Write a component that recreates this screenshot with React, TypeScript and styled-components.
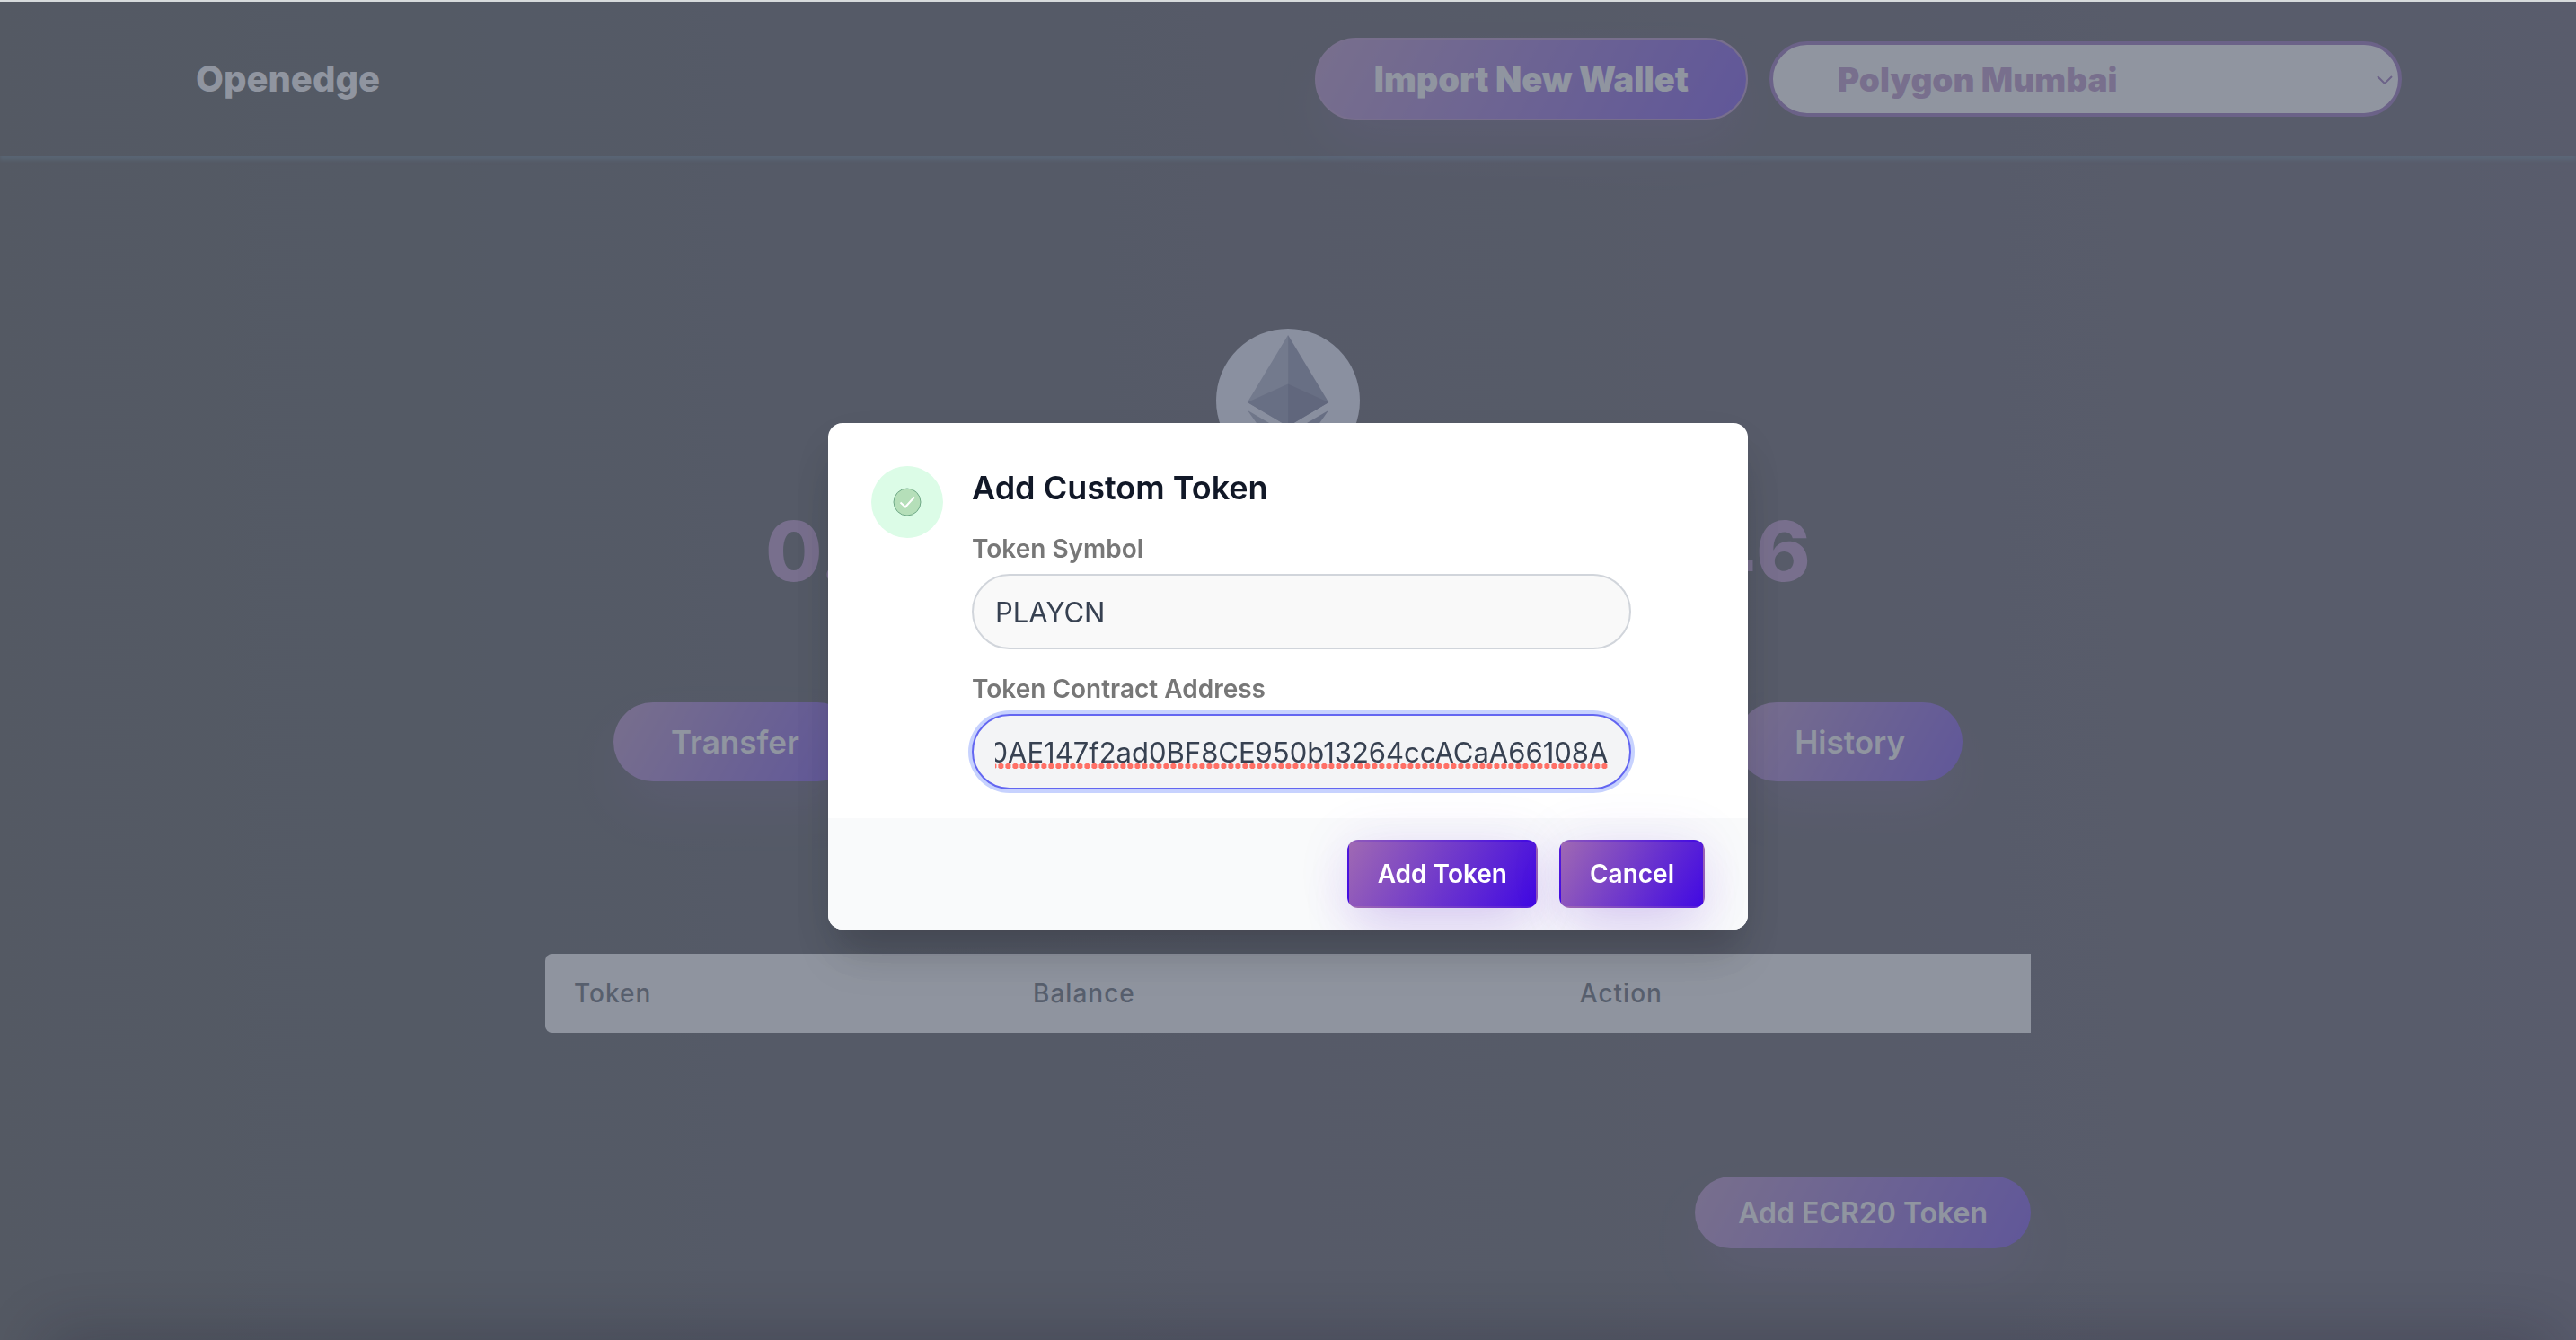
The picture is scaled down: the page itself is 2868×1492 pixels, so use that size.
import React, { useLayoutEffect, useRef, useState } from "react";
import styled, { createGlobalStyle, css } from "styled-components";

const GlobalStyle = createGlobalStyle`
  *, *::before, *::after { box-sizing: border-box; }
  html, body { margin: 0; padding: 0; background: #10131a; }
  body { font-family: Inter, "Noto Sans", sans-serif; overflow: hidden; }
  button, input, select { font-family: inherit; margin: 0; }
`;

const violetGradient = "linear-gradient(120deg, #9f69b3, #4109e3)";

const Page = styled.div`
  min-height: 100vh;
  border-top: 2px solid #d8dcdd;
  background: linear-gradient(90deg, #11130f 0%, #14151d 30%, #1b1822 60%, #241f31 100%);
`;

const Header = styled.header`
  height: 172px;
  padding: 0 24px;
  display: flex;
  justify-content: center;
  box-shadow: 0 4px 4px rgba(56, 110, 140, 0.5);
`;

const HeaderInner = styled.div`
  width: 100%;
  max-width: 2480px;
  padding-left: 24px;
  display: flex;
  align-items: center;
  justify-content: space-between;
`;

const Logo = styled.a`
  color: #fff;
  font-size: 40px;
  line-height: 48px;
  font-weight: 800;
  text-decoration: none;
`;

const HeaderActions = styled.div`
  display: flex;
  align-items: center;
  gap: 24px;
`;

const PillButton = styled.button<{ $size: "large" | "medium" | "small" }>`
  border: 0;
  border-radius: 48px;
  color: #fff;
  background-image: ${violetGradient};
  box-shadow: 0 30px 60px -10px rgba(151, 65, 252, 0.2);
  cursor: pointer;
  white-space: nowrap;
  font-weight: 600;
  ${({ $size }) =>
    $size === "large" &&
    css`
      height: 92px;
      padding: 0 64px;
      border: 2px solid #9f69b3;
      font-size: 38px;
      font-weight: 900;
    `}
  ${({ $size }) =>
    $size === "medium" &&
    css`
      height: 88px;
      padding: 0 64px;
      font-size: 35px;
    `}
  ${({ $size }) =>
    $size === "small" &&
    css`
      height: 80px;
      padding: 0 48px;
      font-size: 32px;
    `}
`;

const NetworkPicker = styled.div`
  position: relative;
  width: 704px;
`;

const NetworkSelect = styled.select`
  appearance: none;
  display: block;
  width: 100%;
  height: 84px;
  padding: 0 72px;
  border: 4px solid #6e35a0;
  border-radius: 42px;
  background: #fff;
  color: #9f69b3;
  font-size: 37px;
  font-weight: 900;
`;

const Chevron = styled.svg`
  position: absolute;
  right: 10px;
  top: 38px;
  width: 18px;
  height: 10px;
  pointer-events: none;
`;

const Main = styled.main`
  display: flex;
  flex-direction: column;
  align-items: center;
  padding: 192px 24px 0;
`;

const Coin = styled.svg`
  display: block;
  width: 160px;
  height: 160px;
`;

const Balance = styled.h1`
  margin: 40px 0 0;
  color: #9f69b3;
  font-size: 92px;
  line-height: 96px;
  font-weight: 800;
`;

const AccountActions = styled.div`
  width: 100%;
  max-width: 1502px;
  margin-top: 120px;
  display: flex;
  justify-content: space-between;
`;

const Assets = styled.section`
  width: 100%;
  max-width: 1654px;
  margin-top: 192px;
  display: flex;
  flex-direction: column;
  align-items: flex-end;
  gap: 160px;
`;

const AssetTable = styled.table`
  width: 100%;
  border-collapse: collapse;
  table-layout: fixed;
  background: #f9fafb;
  border-radius: 8px 0 0 8px;
`;

const HeadCell = styled.th<{ $width: string }>`
  width: ${({ $width }) => $width};
  height: 88px;
  padding: 0 32px;
  text-align: left;
  color: #1f2937;
  font-size: 28px;
  font-weight: 500;
  letter-spacing: 1px;
`;

const Overlay = styled.div`
  position: fixed;
  inset: 2px 0 0;
  display: flex;
  align-items: center;
  justify-content: center;
  padding-top: 12px;
  background: rgba(107, 114, 128, 0.75);
`;

const Dialog = styled.form`
  width: 1024px;
  border-radius: 16px;
  overflow: hidden;
  background: #fff;
  box-shadow: 0 40px 50px -10px rgba(0, 0, 0, 0.12), 0 20px 50px -10px rgba(0, 0, 0, 0.12);
`;

const DialogBody = styled.div`
  display: flex;
  align-items: flex-start;
  gap: 32px;
  padding: 48px 48px 32px;
`;

const Badge = styled.div`
  flex: none;
  width: 80px;
  height: 80px;
  border-radius: 50%;
  display: flex;
  align-items: center;
  justify-content: center;
  background: #dcfce7;
`;

const Fields = styled.div`
  flex: 1;
  display: flex;
  flex-direction: column;
  gap: 24px;
`;

const DialogTitle = styled.h2`
  margin: 0;
  color: #111827;
  font-size: 36px;
  line-height: 48px;
  font-weight: 600;
`;

const Field = styled.div`
  width: 90%;
  display: flex;
  flex-direction: column;
  gap: 8px;
`;

const FieldLabel = styled.label`
  color: #777;
  font-size: 28px;
  line-height: 40px;
  font-weight: 600;
`;

const InputWrap = styled.div`
  position: relative;
`;

const TextInput = styled.input<{ $active?: boolean }>`
  display: block;
  width: 100%;
  height: 84px;
  padding: 0 24px;
  border: 2px solid #d1d5db;
  border-radius: 42px;
  outline: none;
  background: #f9f9f9;
  color: #374151;
  font-size: 31px;
  ${({ $active }) =>
    $active &&
    css`
      border-color: #6366f1;
      background: #f3f4f6;
      box-shadow: 0 0 0 4px #c7d2fe;
    `}
`;

const SpellingMark = styled.span`
  position: absolute;
  left: 26px;
  right: 26px;
  top: 55px;
  height: 6px;
  background: radial-gradient(circle at center, #ff7066 2px, #ff7066 3px, transparent 3px) right top / 8px 6px repeat-x;
  pointer-events: none;
`;

const DialogFooter = styled.div`
  display: flex;
  justify-content: flex-end;
  gap: 24px;
  padding: 24px 48px;
  background: #f9fafb;
`;

const DialogButton = styled.button`
  height: 76px;
  padding: 0 32px;
  border: 2px solid transparent;
  border-radius: 12px;
  color: #fff;
  background-image: ${violetGradient};
  box-shadow: 0 30px 60px -10px rgba(101, 41, 212, 0.2), 0 0 60px rgba(101, 41, 212, 0.1);
  font-size: 28px;
  font-weight: 600;
  cursor: pointer;
`;

const BottomShade = styled.div`
  position: fixed;
  left: 56px;
  right: 32px;
  bottom: -60px;
  height: 60px;
  box-shadow: 0 0 70px 6px rgba(20, 16, 32, 0.24);
`;

const EthereumCoin = () => (
  <Coin viewBox="0 0 160 160" aria-hidden="true">
    <circle cx="80" cy="80" r="80" fill="#e8eaff" />
    <g transform="translate(34.8 7) scale(0.3535)">
      <path d="M127.96 0L0 212.32l127.96 75.64z" fill="#8a92b2" />
      <path d="M127.96 0l127.96 212.32-127.96 75.64z" fill="#62688f" />
      <path d="M0 212.32l127.96 75.64V154.16z" fill="#62688f" />
      <path d="M127.96 154.16v133.8l127.96-75.64z" fill="#454a75" />
      <path d="M0 236.59l127.96 180.32V312.19z" fill="#7f87a8" />
      <path d="M127.96 312.19v104.72L256 236.59z" fill="#62688f" />
    </g>
  </Coin>
);

const CheckIcon = () => (
  <svg width="32" height="32" viewBox="0 0 32 32" fill="none" aria-hidden="true">
    <circle cx="16" cy="16" r="15" fill="#b5dfb9" stroke="#6fa987" />
    <path d="M8.5 16.5l5.5 5L24 10.5" stroke="#fff" strokeWidth="2" />
  </svg>
);

export default function App() {
  const [symbol, setSymbol] = useState("PLAYCN");
  const [address, setAddress] = useState("0x0AE147f2ad0BF8CE950b13264ccACaA66108A");
  const addressRef = useRef<HTMLInputElement>(null);

  useLayoutEffect(() => {
    const field = addressRef.current;
    if (field) field.scrollLeft = field.scrollWidth;
  }, []);

  return (
    <>
      <GlobalStyle />
      <Page>
        <Header>
          <HeaderInner>
            <Logo href="#">Openedge</Logo>
            <HeaderActions>
              <PillButton type="button" $size="large">Import New Wallet</PillButton>
              <NetworkPicker>
                <NetworkSelect aria-label="Network" defaultValue="mumbai">
                  <option value="mumbai">Polygon Mumbai</option>
                </NetworkSelect>
                <Chevron viewBox="0 0 18 10" fill="none" aria-hidden="true">
                  <path d="M1 1l8 8 8-8" stroke="#6e35a0" strokeWidth="2" />
                </Chevron>
              </NetworkPicker>
            </HeaderActions>
          </HeaderInner>
        </Header>
        <Main>
          <EthereumCoin />
          <Balance>0.000010010000001046</Balance>
          <AccountActions>
            <PillButton type="button" $size="medium">Transfer</PillButton>
            <PillButton type="button" $size="medium">History</PillButton>
          </AccountActions>
          <Assets>
            <AssetTable>
              <thead>
                <tr>
                  <HeadCell scope="col" $width="30.9%">Token</HeadCell>
                  <HeadCell scope="col" $width="36.8%">Balance</HeadCell>
                  <HeadCell scope="col" $width="32.3%">Action</HeadCell>
                </tr>
              </thead>
            </AssetTable>
            <PillButton type="button" $size="small">Add ECR20 Token</PillButton>
          </Assets>
        </Main>
      </Page>
      <Overlay>
        <Dialog role="dialog" aria-labelledby="dialog-title" onSubmit={(e) => e.preventDefault()}>
          <DialogBody>
            <Badge>
              <CheckIcon />
            </Badge>
            <Fields>
              <DialogTitle id="dialog-title">Add Custom Token</DialogTitle>
              <Field>
                <FieldLabel htmlFor="symbol">Token Symbol</FieldLabel>
                <TextInput id="symbol" value={symbol} onChange={(e) => setSymbol(e.target.value)} />
              </Field>
              <Field>
                <FieldLabel htmlFor="address">Token Contract Address</FieldLabel>
                <InputWrap>
                  <TextInput
                    id="address"
                    ref={addressRef}
                    $active
                    value={address}
                    onChange={(e) => setAddress(e.target.value)}
                  />
                  <SpellingMark />
                </InputWrap>
              </Field>
            </Fields>
          </DialogBody>
          <DialogFooter>
            <DialogButton type="submit">Add Token</DialogButton>
            <DialogButton type="button">Cancel</DialogButton>
          </DialogFooter>
        </Dialog>
      </Overlay>
      <BottomShade />
    </>
  );
}
